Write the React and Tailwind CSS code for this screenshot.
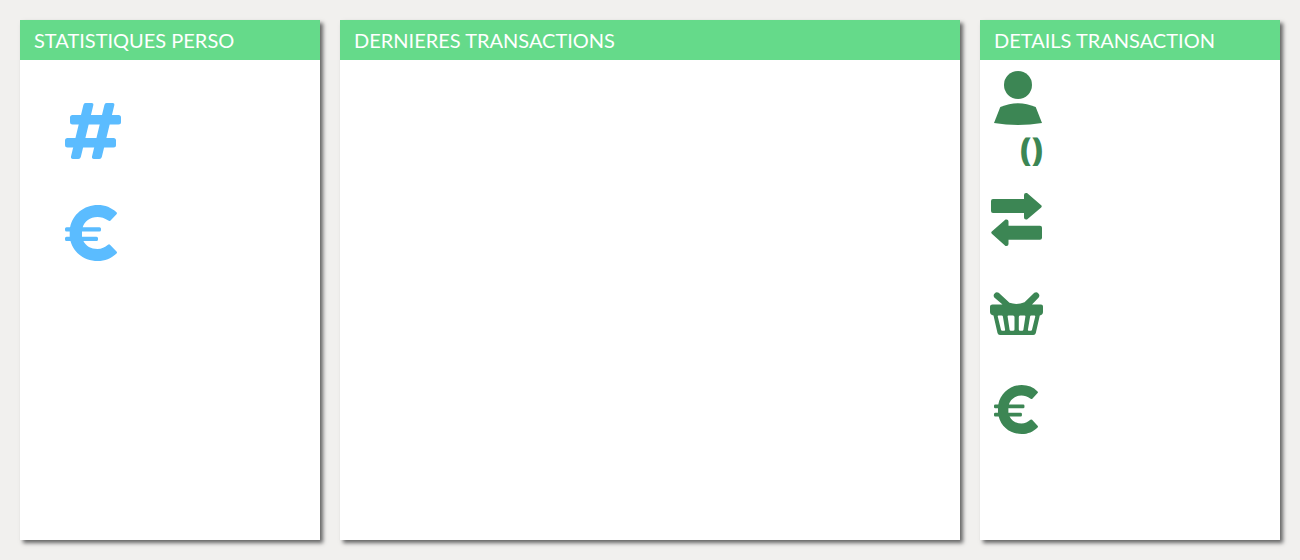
import React from "react";

function Panel({ title, className, children }) {
  return (
    <section className={`flex flex-col bg-white shadow-[3px_3px_4px_#656565] ${className}`}>
      <h2 className="h-10 bg-[#65da8a] px-3.5 font-['Lato','Open_Sans',sans-serif] text-[20px] leading-10 font-normal whitespace-nowrap text-white">
        {title}
      </h2>
      {children}
    </section>
  );
}

function HashIcon({ className }) {
  return (
    <svg viewBox="0 0 56 56" className={className} fill="currentColor" role="img" aria-label="Nombre">
      <rect x="5" y="12" width="51" height="9.5" rx="2.5" />
      <rect x="0" y="35" width="51" height="9.5" rx="2.5" />
      <path d="M20.5 0H26.5Q28.8 0 28.3 2.3L15.8 54Q15.3 56 13.3 56H8Q5.500 56 6 53.600L18.400 2Q18.800 0 20.500 0Z" />
      <path d="M41.500 0H47.500Q49.800 0 49.300 2.300L36.800 54Q36.300 56 34.300 56H29Q26.500 56 27 53.600L39.400 2Q39.800 0 41.500 0Z" />
    </svg>
  );
}

function EuroIcon({ className }) {
  return (
    <svg viewBox="0 0 52 56" preserveAspectRatio="none" className={className} fill="currentColor" role="img" aria-label="Montant">
      <path d="M51.500 7.300Q52.400 8.200 51.500 9.200L45.300 15.700Q44.300 16.500 43.300 15.600C39.500 13 36 12 32.500 12C25 12 19.300 16.500 17.700 22.300H34.500Q36 22.300 36 23.800V25Q36 26.500 34.500 26.500H17V31.700H31.500Q33 31.700 33 33.200V34.500Q33 36 31.500 36H18.400C20.800 41 26 44 32.500 44C36.500 44 40 42.500 43 39.800Q44 38.900 45 39.700L51.500 46.500Q52.500 47.500 51.500 48.500C46.300 53.400 40.300 56 32.800 56C19.500 56 8.600 48 5.500 36H1.500Q0 36 0 34.500V33.200Q0 31.700 1.500 31.700H4.700V26.500H1.500Q0 26.500 0 25V23.800Q0 22.300 1.500 22.300H5.100C7.500 9.500 19 0 32.800 0C40.300 0 46.300 2.500 51.500 7.300Z" />
    </svg>
  );
}

function UserIcon({ className }) {
  return (
    <svg viewBox="0 0 48 54" className={className} fill="currentColor" role="img" aria-label="Client">
      <circle cx="24" cy="14" r="14" />
      <path d="M6.300 36Q24 28.300 41.700 36L48 52Q24 56 0 52Z" />
    </svg>
  );
}

function ExchangeIcon({ className }) {
  return (
    <svg viewBox="0 0 51 53" className={className} fill="currentColor" role="img" aria-label="Virement">
      <path d="M2 6H33V2Q33 0 35 0H36L50.200 12.200Q51.300 13.300 50.200 14.400L36 26.500H35Q33 26.500 33 24.500V20H2Q0 20 0 18V8Q0 6 2 6Z" />
      <path d="M49 32.800H17.500V28.500Q17.500 26.500 15.500 26.500H14.500L.800 38.500Q-.300 39.600.800 40.700L14.500 53H15.500Q17.500 53 17.500 51V46.700H49Q51 46.700 51 44.700V34.800Q51 32.800 49 32.800Z" />
    </svg>
  );
}

function BasketIcon({ className }) {
  return (
    <svg viewBox="0 0 53 43" className={className} fill="currentColor" role="img" aria-label="Achat">
      <path fillRule="evenodd" d="M2.500 12.500H12.500L4.300 5.500A3.300 3.300 0 0 1 8.700.800L19.500 10.800Q27 13.300 34.500 10.300L44.300.800A3.300 3.300 0 0 1 48.700 5.500L42 12.500H51Q53 12.500 53 14.500V20Q53 22.500 49.800 23.500L45.800 41Q45.400 43 43.300 43H10Q8 43 7.500 41L3.500 23.500Q0 22.500 0 20V14.500Q0 12.500 2.500 12.500ZM8.500 23.500Q7.500 23.500 7.800 24.700L11 37.800Q11.200 38.800 12.200 38.800H14.300Q15.300 38.800 15.100 37.800L12.900 24.500Q12.700 23.500 11.700 23.500ZM18.500 23.500Q17.400 23.500 17.600 24.600L19.600 37.800Q19.800 38.800 20.800 38.800H23Q24.500 38.800 24.500 37.500V25Q24.500 23.500 23 23.500ZM30 23.500Q28.800 23.500 28.800 25V37.500Q28.800 38.800 30 38.800H32.200Q33.200 38.800 33.400 37.800L35.400 24.600Q35.600 23.500 34.500 23.500ZM41.300 23.500Q40.300 23.500 40.100 24.500L37.900 37.800Q37.700 38.800 38.700 38.800H40.800Q41.800 38.800 42 37.800L45.200 24.700Q45.500 23.500 44.500 23.500Z" />
    </svg>
  );
}

export default function App() {
  return (
    <main className="flex min-h-screen gap-5 bg-[#f1f0ee] p-5">
      <Panel title="STATISTIQUES PERSO" className="w-[300px] shrink-0">
        <div className="flex flex-col items-start gap-[46px] px-[45px] pt-[43px] text-[#5bbcff]">
          <HashIcon className="h-14 w-14" />
          <EuroIcon className="h-14 w-[52px]" />
        </div>
      </Panel>
      <Panel title="DERNIERES TRANSACTIONS" className="min-w-0 flex-1" />
      <Panel title="DETAILS TRANSACTION" className="w-[300px] shrink-0">
        <div className="flex w-[73px] flex-col items-center px-2.5 pt-[11px] text-[#3c8654]">
          <UserIcon className="mr-px ml-1 h-[54px] w-12" />
          <span className="mt-1 self-end font-['Open_Sans',sans-serif] text-[32px] leading-10 font-extrabold">()</span>
          <ExchangeIcon className="mt-6 h-[53px] w-[51px]" />
          <BasketIcon className="mt-[46px] h-[43px] w-[53px]" />
          <EuroIcon className="mt-[50px] mr-px h-[49px] w-11" />
        </div>
      </Panel>
    </main>
  );
}
